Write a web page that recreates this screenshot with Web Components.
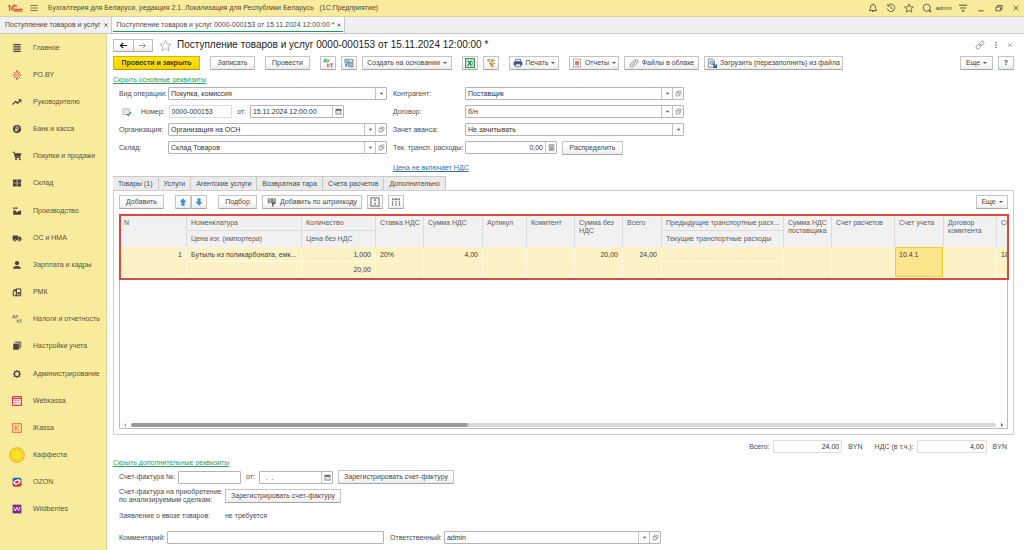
<!DOCTYPE html>
<html lang="ru">
<head>
<meta charset="utf-8">
<title>Поступление товаров и услуг 0000-000153</title>
<style>
html,body{margin:0;height:100%}
body{font-family:"Liberation Sans",Arial,sans-serif;font-size:7px;line-height:8px;color:#4a4a4a;background:#fff}
</style>
</head>
<body>
<app-window></app-window>
<script>
const ICONS = {
  logo:{w:16,h:10,vb:'0 0 32 20',s:'<g fill="none" stroke="#d8252c" stroke-width="2"><path d="M1.500 7.500L5.500 4v12M20 7a5.800 5.800 0 1 0-5.500 9H31M17 8.500a2.700 2.700 0 1 0-2.500 4H31"/></g>'},
  burger:{s:'<path d="M2 4h12M2 8h12M2 12h12" stroke="#6b6240" stroke-width="1.300"/>'},
  bell:{s:'<path d="M2 12h12l-2-3V6.500a4 4 0 0 0-8 0V9zM6.500 12.500a1.500 1.500 0 0 0 3 0M8 2.500V1" fill="none" stroke="#4f4930" stroke-width="1.300"/>'},
  history:{s:'<path d="M3 4.500A6 6 0 1 1 2.200 9M3 1.500v3.300h3.300M8 4.500V8l3 2" fill="none" stroke="#4f4930" stroke-width="1.300"/>'},
  star:{s:'<path d="M8 1.500l2 4.600 5 .4-3.800 3.200 1.200 4.900L8 12l-4.400 2.600 1.200-4.900L1 6.500l5-.4z" fill="none" stroke="currentColor" stroke-width="1.200"/>'},
  search:{s:'<circle cx="7.500" cy="7.500" r="5.700" fill="none" stroke="#4f4930" stroke-width="1.300"/><path d="M11.500 11.500l3 3" stroke="#4f4930" stroke-width="2"/>'},
  filter:{s:'<path d="M1.500 3.500h13M3.500 8h9" stroke="#4f4930" stroke-width="1.500"/><path d="M5 11.500h6l-3 3z" fill="#4f4930"/>'},
  min:{s:'<path d="M4 12.500h8" stroke="#4f4930" stroke-width="1.500"/>'},
  restore:{s:'<path d="M3 6.500h7.500v6H3zM5.500 6.500V4h7.500v6h-2.500" fill="none" stroke="#4f4930" stroke-width="1.300"/>'},
  close:{s:'<path d="M3 3l10 10M13 3L3 13" stroke="currentColor" stroke-width="1.600"/>'},
  x:{s:'<path d="M2 2l12 12M14 2L2 14" stroke="#444" stroke-width="3"/>'},
  link:{s:'<path d="M6.500 9.500l4-4M7.500 4.500l2-2a2.800 2.800 0 0 1 4 4l-2.500 2.500a2.800 2.800 0 0 1-3.500.2M8.500 11.500l-2 2a2.800 2.800 0 0 1-4-4L5 7a2.800 2.800 0 0 1 3.500-.2" fill="none" stroke="#777" stroke-width="1.200"/>'},
  dots:{s:'<g fill="#666"><circle cx="8" cy="3" r="1.600"/><circle cx="8" cy="8" r="1.600"/><circle cx="8" cy="13" r="1.600"/></g>'},
  left:{s:'<path d="M14.500 8H3M7.500 3.500L2.500 8l5 4.500" fill="none" stroke="#222" stroke-width="2.200"/>'},
  right:{s:'<path d="M1.500 8H13M8.500 3.500l5 4.500-5 4.500" fill="none" stroke="#999" stroke-width="1.700"/>'},
  lines:{s:'<path d="M2 2.500h12M2 6.200h12M2 9.800h12M2 13.500h12" stroke="#4a4247" stroke-width="2"/>'},
  spark:{s:'<g stroke="#e0323c" stroke-width="1.500"><path d="M8 1v4.500M8 10.500V15M1 8h4.500M10.500 8H15M3 3l3 3M13 3l-3 3M3 13l3-3M13 13l-3-3"/></g><g fill="#e0323c"><circle cx="8" cy="1.500" r="1.200"/><circle cx="8" cy="14.500" r="1.200"/><circle cx="8" cy="8" r="1.200"/></g>'},
  trend:{s:'<path d="M1 12l5-5 3 3 4.500-5" fill="none" stroke="#4a4247" stroke-width="2"/><path d="M9.500 3.500H15V9z" fill="#4a4247"/>'},
  coin:{s:'<circle cx="8" cy="8" r="6.500" fill="#4a4247"/><path d="M6.500 12V4.500h2.300a2 2 0 0 1 0 4.200H5M5 10.500h4" fill="none" stroke="#f9eb9c" stroke-width="1.300"/>'},
  cart:{s:'<path d="M1 2h2.500l2 8.500h8" fill="none" stroke="#4a4247" stroke-width="1.700"/><path d="M4 3.500h11L13.500 9H5.200z" fill="#4a4247"/><circle cx="6.500" cy="13" r="1.600" fill="#4a4247"/><circle cx="12.500" cy="13" r="1.600" fill="#4a4247"/>'},
  grid:{s:'<path d="M1.500 2.500h6v5h-6zM8.500 2.500h6v5h-6zM1.500 8.500h6v5h-6zM8.500 8.500h6v5h-6z" fill="#4a4247"/>'},
  factory:{s:'<path d="M2 14V8l2.500-1.500L8 10l3-2.500 1 1L14.500 6V14zM2 2h2v3.500H2zM5 2.500h4v1.800H5z" fill="#4a4247"/>'},
  truck:{s:'<path d="M1 4h8.500v7.500H1zM10 5.500h3l2.200 3v3H10z" fill="#4a4247"/><circle cx="4.500" cy="12" r="1.800" fill="#4a4247" stroke="#f9eb9c" stroke-width=".6"/><circle cx="12" cy="12" r="1.800" fill="#4a4247" stroke="#f9eb9c" stroke-width=".6"/>'},
  person:{s:'<circle cx="8" cy="5" r="3.300" fill="#4a4247"/><path d="M2 14v-2.500L6 9.500h4l4 2V14z" fill="#4a4247"/>'},
  pos:{s:'<path d="M2 6h5v8H2zM7 3h7v11H7z" fill="none" stroke="#4a4247" stroke-width="1.600"/><path d="M3 3.500h5v3H3zM9 8h3.500v4H9z" fill="#4a4247"/>'},
  dtktg:{s:'<path d="M1 7l2-5h1l1.500 5M2 5.500h3M6.500 2.500h3M8 2.500V7M8.500 9v5M12 9l-3 2.500 3 2.500M12.500 9.500h3M14 9.500V14" fill="none" stroke="#6a6050" stroke-width="1.200"/>'},
  dtkt:{s:'<path d="M1 7l2-5.500h1.500L5.500 7M2 5.500h3.500M7 2.500l1 2.500M10 2L7.500 7.500" fill="none" stroke="#2e9b57" stroke-width="1.500"/><path d="M7.500 9v6M11 9l-3 3 3 3M11.500 9.500H16M13.700 9.500V15" fill="none" stroke="#e0473a" stroke-width="1.500"/>'},
  books:{s:'<path d="M2 4.500h9V14H2z" fill="#4a4247"/><path d="M4 3h8.500v9.500M5.500 1.500H14V11" fill="none" stroke="#4a4247" stroke-width="1.200"/>'},
  gear:{s:'<circle cx="8" cy="8" r="4" fill="none" stroke="#4a4247" stroke-width="1.800"/><path d="M8 1.500v2.500M8 12v2.500M1.500 8H4M12 8h2.500M3.400 3.400l1.800 1.800M10.800 10.800l1.800 1.800M12.600 3.400l-1.800 1.800M5.200 10.800l-1.800 1.800" stroke="#4a4247" stroke-width="2"/>'},
  webkassa:{s:'<rect x="1" y="1" width="14" height="14" rx="1" fill="#fff" stroke="#e8304a" stroke-width="2"/><path d="M1 4h14" stroke="#e8304a" stroke-width="2"/><g fill="#f0647a"><path d="M4 6.500h2v2H4zM7 6.500h2v2H7zM10 6.500h2v2h-2zM4 10h2v2H4zM7 10h2v2H7zM10 10h2v2h-2z"/></g>'},
  ikassa:{s:'<rect x="1" y="1" width="14" height="14" fill="#fbd98f" stroke="#ea7157" stroke-width="1.500"/><path d="M5.500 4v8M11 4L6.500 8l4.500 4" fill="none" stroke="#e8604c" stroke-width="1.300"/>'},
  kaffesta:{s:'<circle cx="8" cy="8" r="7.300" fill="#fbe21b" stroke="#e3ad1e" stroke-width="1"/><circle cx="8" cy="8" r="4.800" fill="#ffe22a" stroke="#efc31e" stroke-width=".8"/>'},
  ozon:{s:'<rect x="1" y="1" width="14" height="14" rx="2.500" fill="#1f66b5"/><path d="M1 9.500L15 6v6.500A2.500 2.500 0 0 1 12.500 15h-9A2.500 2.500 0 0 1 1 12.500z" fill="#e8304a"/><ellipse cx="8" cy="8" rx="6" ry="3.800" fill="#fff" transform="rotate(-18 8 8)"/><ellipse cx="8" cy="8" rx="3.300" ry="1.900" fill="#e8203a" transform="rotate(-18 8 8)"/>'},
  wb:{s:'<rect x="1" y="1" width="14" height="14" fill="#7b2a94"/><path d="M3 5l2.200 6L8 5l2.500 6L13 4.500" fill="none" stroke="#f4dff5" stroke-width="1.500"/>'},
  blocks:{s:'<path d="M1.500 2h7v6h-7zM7.500 8h7v6h-7z" fill="#cfe0ef" stroke="#47749c" stroke-width="1.200"/><path d="M10.500 2.500h4v4h-4M3 10l2 4M3 14v-4h3M3 4l4 3M9 10l4 3" fill="none" stroke="#47749c" stroke-width="1.400"/>'},
  excel:{s:'<rect x="1" y="1" width="14" height="14" fill="#e4f4ea" stroke="#23854d" stroke-width="1.700"/><path d="M4.500 4l6 8M10.500 4l-6 8" stroke="#1c7a44" stroke-width="2"/><path d="M12 4v8" stroke="#6fb78c" stroke-width="1.300"/>'},
  hand:{s:'<path d="M2 2.500h5M2 5h4" stroke="#4b9b5e" stroke-width="1.500"/><circle cx="9.500" cy="4.500" r="2.500" fill="#e79a3c"/><path d="M5 7l6 1 2 6.500H8z" fill="#dca35b"/><path d="M11 2l3 3M12 8l2.500 1" stroke="#38784a" stroke-width="1.400"/><path d="M5.500 7.500L9 11" stroke="#5b6c50" stroke-width="1.200"/>'},
  print:{s:'<path d="M4 2h8v4H4z" fill="#fff" stroke="#456" stroke-width="1.200"/><rect x="1" y="5.500" width="14" height="6.500" rx="1.500" fill="#35598c"/><path d="M4 9.500h8V14H4z" fill="#e9f1fb" stroke="#35598c"/>'},
  report:{s:'<path d="M2.500 1.500h11v13h-11z" fill="#fff" stroke="#888" stroke-width="1.100"/><path d="M5 5h6v6H5z" fill="#e26a57"/><path d="M6 12.500h5" stroke="#999"/>'},
  clip:{s:'<path d="M5 11l6-6a1.500 1.500 0 0 0-2-2L3 9a3 3 0 0 0 4.300 4.300L14 6.500A3.500 3.500 0 0 0 12 2" fill="none" stroke="#777" stroke-width="1.400"/>'},
  load:{s:'<path d="M2 1.500h7l3 3v10H2z" fill="#fff" stroke="#667" stroke-width="1.200"/><circle cx="7.500" cy="7.500" r="2.800" fill="#bcd9f0" stroke="#3c6c98" stroke-width="1.300"/><path d="M9.500 10l5 4.500M15 10v5h-5" fill="none" stroke="#235d94" stroke-width="2"/>'},
  up:{s:'<path d="M8 2l5.500 6H10.500v6h-5V8H2.500z" fill="#4390d0"/>'},
  down:{s:'<path d="M8 14l5.500-6H10.500V2h-5v6H2.500z" fill="#4390d0"/>'},
  barcode:{s:'<path d="M2 2v8M4.500 2v8M7 2v8M9 2v6M11.500 2v6" stroke="#555" stroke-width="1.400"/><path d="M8 8h6v3h-3l-1 4H8z" fill="#666"/><path d="M13.500 2v5" stroke="#555"/>'},
  fit:{s:'<rect x="1.500" y="1.500" width="13" height="13" fill="#fff" stroke="#555" stroke-width="1.400"/><path d="M8 4v3M8 9v3M6.500 5.500L8 4l1.500 1.500M6.500 10.500L8 12l1.500-1.500" fill="none" stroke="#444" stroke-width="1.300"/>'},
  split:{s:'<path d="M2.500 6.500v8M8 6.500v8M13.500 6.500v8" stroke="#555" stroke-width="1.500" stroke-dasharray="2 .6"/><path d="M2 3.500h12M4 1.500l-2 2 2 2M12 1.500l2 2-2 2M8 1.500v4" fill="none" stroke="#555" stroke-width="1.200"/>'},
  posted:{s:'<path d="M1.500 3h10v9h-10z" fill="#fff" stroke="#999" stroke-width="1.200"/><path d="M3.500 6h6M3.500 8.500h5" stroke="#aaa"/><path d="M7.500 11l2.500 2.500L14.500 8" fill="none" stroke="#3f9e5e" stroke-width="2.200"/>'},
  arrow:{s:'<path d="M4 6h8l-4 5z" fill="#555"/>'},
  open:{s:'<path d="M2.500 6h7v7.500h-7zM6 6V2.500h7.500v7H9.500" fill="none" stroke="#666" stroke-width="1.300"/>'},
  cal:{s:'<path d="M2 3h12v11H2z" fill="#fff" stroke="#555" stroke-width="1.400"/><path d="M2 4.500h12" stroke="#444" stroke-width="3.200"/><path d="M4 9h8M4 11.500h8" stroke="#aaa" stroke-width="1.200"/>'},
  calc:{s:'<path d="M2.500 1.500h11v13h-11z" fill="#ddd" stroke="#666" stroke-width="1.300"/><path d="M4.500 4.500h7M4.500 7.500h7M4.500 10h7M4.500 12.500h7" stroke="#777" stroke-width="1.400"/>'},
};
const define = (name, html, setup) => {
  const t = document.createElement('template');
  customElements.define(name, class extends HTMLElement {
    connectedCallback() {
      if (this.shadowRoot) return;
      t.innerHTML = typeof html === 'function' ? html(this) : html;
      this.attachShadow({mode:'open'}).append(t.content.cloneNode(true));
      if (setup) setup(this);
    }
  });
};
const at = (e, n) => e.getAttribute(n) || '';

define('ui-icon', e => {
  const i = ICONS[at(e,'name')];
  const w = i.w || at(e,'size') || 10, h = i.h || at(e,'size') || 10;
  return `<style>:host{display:inline-flex;flex:none}svg{display:block}</style>
  <svg width="${w}" height="${h}" viewBox="${i.vb || '0 0 16 16'}" aria-hidden="true">${i.s}</svg>`;
});

define('tool-button', e => `<style>
:host{display:flex;flex:none}
button{font:inherit;color:#444;flex:1;height:14px;box-sizing:border-box;padding:0;margin:0;display:flex;align-items:center;justify-content:center;gap:3px;white-space:nowrap;
 background:linear-gradient(#fff 40%,#ececec);border:1px solid #c4c4c4;border-bottom-color:#a6a6a6;border-radius:1px}
:host([primary]) button{background:linear-gradient(#ffe619,#f6d000);border-color:#d6b400;border-bottom-color:#b39600;color:#3c3c20;font-weight:bold}
.m{border:2px solid transparent;border-top-color:#555;border-bottom:0}
</style><button type="button" aria-label="${at(e,'hint') || e.textContent.trim()}">${at(e,'icon') ? `<ui-icon name="${at(e,'icon')}"></ui-icon>` : ''}<slot></slot>${e.hasAttribute('menu') ? '<span class="m"></span>' : ''}</button>`);

define('form-field', e => {
  const kind = at(e,'kind') || 'text', v = at(e,'value');
  const control = kind === 'select'
    ? `<select id="c"><option>${v}</option></select><button type="button" class="pick" aria-label="Выбрать"><ui-icon name="arrow" size="7"></ui-icon></button>`
    : `<input id="c" type="text" value="${v}"${e.hasAttribute('readonly') ? ' readonly' : ''}>`;
  const extra = at(e,'extra').split(' ').filter(Boolean)
    .map(n => `<button type="button" aria-label="${{open:'Открыть',cal:'Календарь',calc:'Калькулятор'}[n]}"><ui-icon name="${n}" size="7"></ui-icon></button>`).join('');
  return `<style>
:host{display:flex;align-items:center;min-width:0}
label{flex:none;width:var(--label,auto);margin-right:var(--label-gap,0);white-space:nowrap}
.box{flex:1;min-width:0;display:flex;height:13px;box-sizing:border-box;border:1px solid #b4b4b4;border-radius:1px;background:#fff}
:host([readonly]) .box{border-color:#dedede}
input,select{appearance:none;font:inherit;color:#333;border:0;padding:0 2px;margin:0;flex:1;min-width:0;width:0;background:none;outline:0;height:11px}
:host([numeric]) input{text-align:right}
button{flex:none;width:11px;padding:0;margin:0;border:0;border-left:1px solid #c4c4c4;background:none;display:flex;align-items:center;justify-content:center}
</style><label for="c">${at(e,'label')}</label><div class="box">${control}${extra}</div>`;
}, e => {
  const p = e.shadowRoot.querySelector('.pick');
  if (p) p.onclick = () => e.shadowRoot.querySelector('select').showPicker?.();
});

define('app-header', `<style>
:host{display:flex;align-items:center;height:16px;background:#f9eb9c;border-bottom:1px solid #d9d2a6;padding:0 4px 0 7px;color:#4f4930}
.title{margin-left:9px;flex:1;white-space:nowrap}
ui-icon[name=burger]{margin-left:6px}
.r{display:flex;align-items:center;gap:8px}
.r a{color:inherit;text-decoration:none;font-size:6px;margin:0 -2px 0 -4px}
</style>
<ui-icon name="logo"></ui-icon><ui-icon name="burger"></ui-icon>
<span class="title">Бухгалтерия для Беларуси, редакция 2.1. Локализация для Республики Беларусь &nbsp; (1С:Предприятие)</span>
<div class="r"><ui-icon name="bell"></ui-icon><ui-icon name="history"></ui-icon><ui-icon name="star"></ui-icon><ui-icon name="search"></ui-icon><a href="#user">admin</a><ui-icon name="filter"></ui-icon><ui-icon name="min"></ui-icon><ui-icon name="restore"></ui-icon><ui-icon name="close" size="8"></ui-icon></div>`);

define('window-tabs', `<style>
:host{display:flex;height:16px;background:#f0f0f0;border-bottom:1px solid #c8c8c8}
a{display:flex;align-items:center;gap:3px;padding:0 3px 0 5px;color:#4a4a4a;text-decoration:none;border-right:1px solid #c8c8c8;white-space:nowrap;position:relative}
a.on{background:#fff}
a.on::after{content:"";position:absolute;left:1px;right:1px;bottom:1px;height:1px;background:#12a05a}
</style>
<a href="#list">Поступление товаров и услуг <ui-icon name="x" size="4"></ui-icon></a>
<a class="on" href="#doc">Поступление товаров и услуг 0000-000153 от 15.11.2024 12:00:00 * <ui-icon name="x" size="4"></ui-icon></a>`);

define('nav-item', e => `<style>
:host{display:flex}
a{flex:1;display:flex;align-items:center;color:#5a5240;text-decoration:none;white-space:nowrap}
span{width:32px;display:flex;justify-content:center}
</style><a href="#"><span><ui-icon name="${at(e,'icon')}" size="${at(e,'size') || 10}"></ui-icon></span><slot></slot></a>`);

define('side-nav', `<style>
:host{display:block;background:#f9eb9c;border-right:1px solid #e2d79b}
nav{display:grid;grid-auto-rows:minmax(27px,1fr);height:100%;box-sizing:border-box;padding-bottom:27px}
nav-item{padding-left:1px}
</style><nav>
<nav-item icon="lines">Главное</nav-item><nav-item icon="spark">РО.BY</nav-item><nav-item icon="trend">Руководителю</nav-item>
<nav-item icon="coin">Банк и касса</nav-item><nav-item icon="cart">Покупки и продажи</nav-item><nav-item icon="grid">Склад</nav-item>
<nav-item icon="factory">Производство</nav-item><nav-item icon="truck">ОС и НМА</nav-item><nav-item icon="person">Зарплата и кадры</nav-item>
<nav-item icon="pos">РМК</nav-item><nav-item icon="dtktg">Налоги и отчетность</nav-item><nav-item icon="books">Настройки учета</nav-item>
<nav-item icon="gear">Администрирование</nav-item><nav-item icon="webkassa">Webkassa</nav-item><nav-item icon="ikassa">iKassa</nav-item>
<nav-item icon="kaffesta" size="16">Каффеста</nav-item><nav-item icon="ozon">OZON</nav-item><nav-item icon="wb">Wildberries</nav-item>
</nav>`);

define('doc-title', `<style>
:host{display:flex;align-items:center;height:14px}
.nav{display:flex;width:40px}
.nav button{flex:1;height:13px;box-sizing:border-box;padding:0;margin:0;display:flex;align-items:center;justify-content:center;border:1px solid #bdbdbd;border-bottom-color:#a6a6a6;background:linear-gradient(#fff 40%,#ececec)}
.nav button+button{border-left:0}
.fav{color:#b5b5b5;margin:0 5px 0 6px;display:flex}
h1{font-size:10px;line-height:14px;font-weight:normal;margin:0;color:#222;flex:1;white-space:nowrap}
.r{display:flex;gap:7px;color:#777;align-items:center;padding-right:1px}
</style>
<div class="nav"><button type="button" aria-label="Назад"><ui-icon name="left" size="9"></ui-icon></button><button type="button" aria-label="Вперед"><ui-icon name="right" size="9"></ui-icon></button></div>
<span class="fav"><ui-icon name="star" size="13"></ui-icon></span>
<h1>Поступление товаров и услуг 0000-000153 от 15.11.2024 12:00:00 *</h1>
<div class="r"><ui-icon name="link"></ui-icon><ui-icon name="dots" size="8"></ui-icon><ui-icon name="close" size="6"></ui-icon></div>`);

define('command-bar', `<style>
:host{display:flex;gap:10px}
div{display:flex;gap:5px}
.sp{flex:1}
.i{width:16px}.a{width:87px}.b{width:45px}.c{width:90px}.p{width:50px}.f{width:75px}.z{width:139px}.e{width:33px}
</style>
<tool-button class="a" primary>Провести и закрыть</tool-button><tool-button class="b">Записать</tool-button><tool-button class="b">Провести</tool-button>
<div><tool-button class="i" icon="dtkt" hint="Проводки"></tool-button><tool-button class="i" icon="blocks" hint="Структура подчиненности"></tool-button><tool-button class="c" menu>Создать на основании</tool-button></div>
<div><tool-button class="i" icon="excel" hint="Excel"></tool-button><tool-button class="i" icon="hand" hint="Загрузка"></tool-button></div>
<tool-button class="p" icon="print" menu>Печать</tool-button>
<div><tool-button class="p" icon="report" menu>Отчеты</tool-button><tool-button class="f" icon="clip">Файлы в облаке</tool-button><tool-button class="z" icon="load">Загрузить (перезаполнить) из файла</tool-button></div>
<span class="sp"></span>
<div><tool-button class="e" menu>Еще</tool-button><tool-button class="i"><b>?</b></tool-button></div>`);

define('doc-fields', `<style>
:host{display:grid;grid-template-columns:268px 291px;column-gap:6px;padding-left:6px}
.col{display:grid;grid-auto-rows:13px;row-gap:5px}
.l{--label:49px}.r{--label:72px}
.row{display:flex;align-items:center}
.l .row{--label:auto;--label-gap:4px}
.row ui-icon{margin:0 9px 0 3px}
.num{width:91px}.date{width:107px;margin-left:5px}
.cost{width:164px}
tool-button{width:61px;margin-left:5px}
.price{align-self:end}
a{color:#2f6ea8}
</style>
<div class="col l">
<form-field label="Вид операции:" kind="select" value="Покупка, комиссия"></form-field>
<div class="row"><ui-icon name="posted"></ui-icon><form-field class="num" label="Номер:" value="0000-000153" readonly></form-field><form-field class="date" label="от:" value="15.11.2024 12:00:00" extra="cal"></form-field></div>
<form-field label="Организация:" kind="select" value="Организация на ОСН" extra="open"></form-field>
<form-field label="Склад:" kind="select" value="Склад Товаров" extra="open"></form-field>
</div>
<div class="col r">
<form-field label="Контрагент:" kind="select" value="Поставщик" extra="open"></form-field>
<form-field label="Договор:" kind="select" value="б/н" extra="open"></form-field>
<form-field label="Зачет аванса:" kind="select" value="Не зачитывать"></form-field>
<div class="row"><form-field class="cost" label="Тек. трансп. расходы:" value="0,00" numeric extra="calc"></form-field><tool-button>Распределить</tool-button></div>
<span class="price"><a href="#price">Цена не включает НДС</a></span>
</div>`);

define('page-tabs', `<style>
:host{display:flex;position:relative}
button{font:inherit;color:#4a4a4a;height:14px;box-sizing:border-box;margin:0;padding:0 5px;background:#ebebeb;border:1px solid #c8c8c8;border-left:0;border-bottom:0;white-space:nowrap}
button:first-child{background:#fff;border-left:1px solid #c8c8c8;height:15px;margin-bottom:-1px}
</style>
<button type="button">Товары (1)</button><button type="button">Услуги</button><button type="button">Агентские услуги</button><button type="button">Возвратная тара</button><button type="button">Счета расчетов</button><button type="button">Дополнительно</button>`);

define('goods-table', `<style>
:host{display:flex;flex-direction:column;position:relative;border:1px solid #bcbcbc;min-height:120px;min-width:0}
.view{flex:1;overflow:hidden}
table{border-collapse:separate;border-spacing:0;table-layout:fixed;width:925px}
th,td{box-sizing:border-box;padding:4px 4px 0;vertical-align:top;text-align:left;font-weight:normal}
th{background:#f1f1f1;color:#5c5c5c;border-right:1px solid #dcdcdc}
th.t{border-bottom:1px solid #dcdcdc}
td{background:#fdf1c6;color:#3c3c3c;border-right:1px solid #fff8e2}
td.t{border-bottom:1px solid #fffaea}
th.c,td.c{white-space:nowrap;padding-right:0}
tr{height:16px}
tbody tr{height:15px}
td.n{text-align:right}
td.on{background:#fee58d;box-shadow:inset 0 0 0 1px #f5cd1c}
.mark{position:absolute;left:-1px;right:-2px;top:-1px;height:66px;box-sizing:border-box;border:2px solid #dc4a3f;pointer-events:none}
.scroll{display:flex;align-items:center;gap:5px;height:6px;padding:0 4px}
.bar{flex:1;height:4px;border-radius:2px;background:#d8d8d8}
.bar i{display:block;height:4px;width:39%;border-radius:2px;background:#9a9a9a}
.la,.ra{border:2px solid transparent}
.la{border-right-color:#999;border-left:0}
.ra{border-left-color:#555;border-right:0}
</style>
<div class="view"><table>
<colgroup><col style="width:67px"><col style="width:115px"><col style="width:74px"><col style="width:48px"><col style="width:59px"><col style="width:44px"><col style="width:48px"><col style="width:48px"><col style="width:39px"><col style="width:122px"><col style="width:48px"><col style="width:63px"><col style="width:49px"><col style="width:53px"><col style="width:48px"></colgroup>
<thead>
<tr><th rowspan="2">N</th><th class="t">Номенклатура</th><th class="t">Количество</th><th class="c" rowspan="2">Ставка НДС</th><th rowspan="2">Сумма НДС</th><th rowspan="2">Артикул</th><th rowspan="2">Комитент</th><th rowspan="2">Сумма без НДС</th><th rowspan="2">Всего</th><th class="t c">Предыдущие транспортные расх...</th><th class="c" rowspan="2">Сумма НДС<br>поставщика</th><th rowspan="2">Счет расчетов</th><th rowspan="2">Счет учета</th><th rowspan="2">Договор комитента</th><th rowspan="2">Счет</th></tr>
<tr><th class="c">Цена изг. (импортера)</th><th>Цена без НДС</th><th class="c">Текущие транспортные расходы</th></tr>
</thead>
<tbody>
<tr><td class="n" rowspan="2">1</td><td class="t c">Бутыль из поликарбоната, емк...</td><td class="t n">1,000</td><td rowspan="2">20%</td><td class="n" rowspan="2">4,00</td><td rowspan="2"></td><td rowspan="2"></td><td class="n" rowspan="2">20,00</td><td class="n" rowspan="2">24,00</td><td class="t"></td><td rowspan="2"></td><td rowspan="2"></td><td class="on" rowspan="2">10.4.1</td><td rowspan="2"></td><td rowspan="2">18</td></tr>
<tr><td></td><td class="n">20,00</td><td></td></tr>
</tbody></table></div>
<div class="scroll"><span class="la"></span><span class="bar"><i></i></span><span class="ra"></span></div>
<div class="mark"></div>`);

define('goods-panel', `<style>
:host{display:flex;flex-direction:column;border:1px solid #cfcfcf;padding:4px 5px 5px;min-width:0}
.bar{display:flex;gap:11px;margin-bottom:5px}
.g{display:flex;gap:5px}.pair{display:flex}
.sp{flex:1}
.d{width:45px}.i{width:16px}.s{width:39px}.h{width:100px}.e{width:32px}
goods-table{flex:1}
</style>
<div class="bar"><tool-button class="d">Добавить</tool-button>
<div class="pair"><tool-button class="i" icon="up" hint="Вверх"></tool-button><tool-button class="i" icon="down" hint="Вниз"></tool-button></div>
<div class="g"><tool-button class="s">Подбор</tool-button><tool-button class="h" icon="barcode">Добавить по штрихкоду</tool-button><tool-button class="i" icon="fit" hint="Высота строк"></tool-button><tool-button class="i" icon="split" hint="Колонки"></tool-button></div>
<span class="sp"></span><tool-button class="e" menu>Еще</tool-button></div>
<goods-table></goods-table>`);

define('doc-totals', `<style>
:host{display:flex;justify-content:flex-end;align-items:center;padding-right:7px;gap:6px;--label-gap:3px}
.a{width:93px}.b{width:112px;margin-left:6px}
</style>
<form-field class="a" label="Всего:" value="24,00" numeric readonly></form-field><span>BYN</span>
<form-field class="b" label="НДС (в т.ч.):" value="4,00" numeric readonly></form-field><span>BYN</span>`);

define('doc-extra', `<style>
:host{display:grid;row-gap:4px;padding-left:6px}
div{display:flex;align-items:center;--label-gap:2px}
.n{width:122px}.d{width:87px;margin-left:5px;--label-gap:4px}
tool-button{width:116px}
.d+tool-button{margin-left:5px}
.w{width:106px}
.k{width:265px}.o{width:271px;margin-left:6px}
.decl{margin-top:4px}
.last{margin-top:7px}
</style>
<div><form-field class="n" label="Счет-фактура №:" value=""></form-field><form-field class="d" label="от:" value="  .  ." extra="cal"></form-field><tool-button>Зарегистрировать счет-фактуру</tool-button></div>
<div><span class="w">Счет-фактура на приобретение по анализируемым сделкам:</span><tool-button>Зарегистрировать счет-фактуру</tool-button></div>
<div class="decl"><span class="w">Заявление о ввозе товаров:</span><span>не требуется</span></div>
<div class="last"><form-field class="k" label="Комментарий:" value=""></form-field><form-field class="o" label="Ответственный:" kind="select" value="admin" extra="open"></form-field></div>`);

define('app-window', `<style>
:host{display:flex;flex-direction:column;min-height:100vh}
.body{flex:1;display:grid;grid-template-columns:107px minmax(0,1fr)}
main{display:flex;flex-direction:column;padding:4px 10px 6px 6px;min-width:0}
command-bar{margin-top:4px}
.tog{color:#2f9e62;margin:6px 0 3px;align-self:flex-start}
page-tabs{margin-top:4px}
goods-panel{flex:1}
doc-totals{margin-top:5px}
</style>
<app-header></app-header><window-tabs></window-tabs>
<div class="body"><side-nav></side-nav>
<main><doc-title></doc-title><command-bar></command-bar><a class="tog" href="#main">Скрыть основные реквизиты</a><doc-fields></doc-fields><page-tabs></page-tabs><goods-panel></goods-panel><doc-totals></doc-totals><a class="tog" href="#more">Скрыть дополнительные реквизиты</a><doc-extra></doc-extra></main></div>`);
</script>
</body>
</html>
